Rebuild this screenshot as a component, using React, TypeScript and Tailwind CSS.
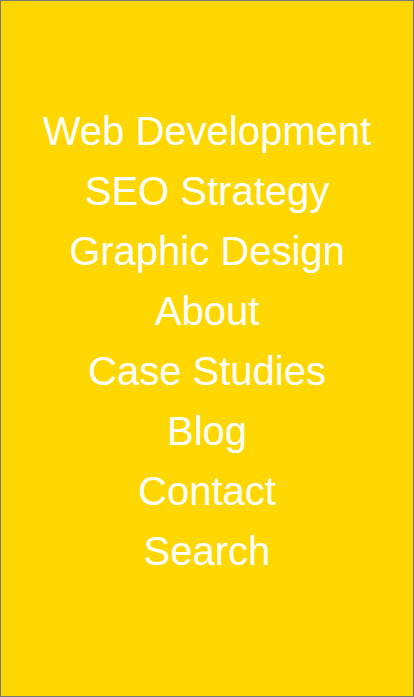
const links = [
  "Web Development",
  "SEO Strategy",
  "Graphic Design",
  "About",
  "Case Studies",
  "Blog",
  "Contact",
  "Search",
];

export default function App() {
  return (
    <div className="w-[414px] h-[697px] bg-[#ffd700] border border-[#777777] flex flex-col items-center pt-[100px] font-['Liberation_Sans',Arial,sans-serif]">
      <nav className="flex flex-col items-center">
        {links.map((link) => (
          <a key={link} href="#" className="text-white text-[40px] leading-[60px]">
            {link}
          </a>
        ))}
      </nav>
    </div>
  );
}
